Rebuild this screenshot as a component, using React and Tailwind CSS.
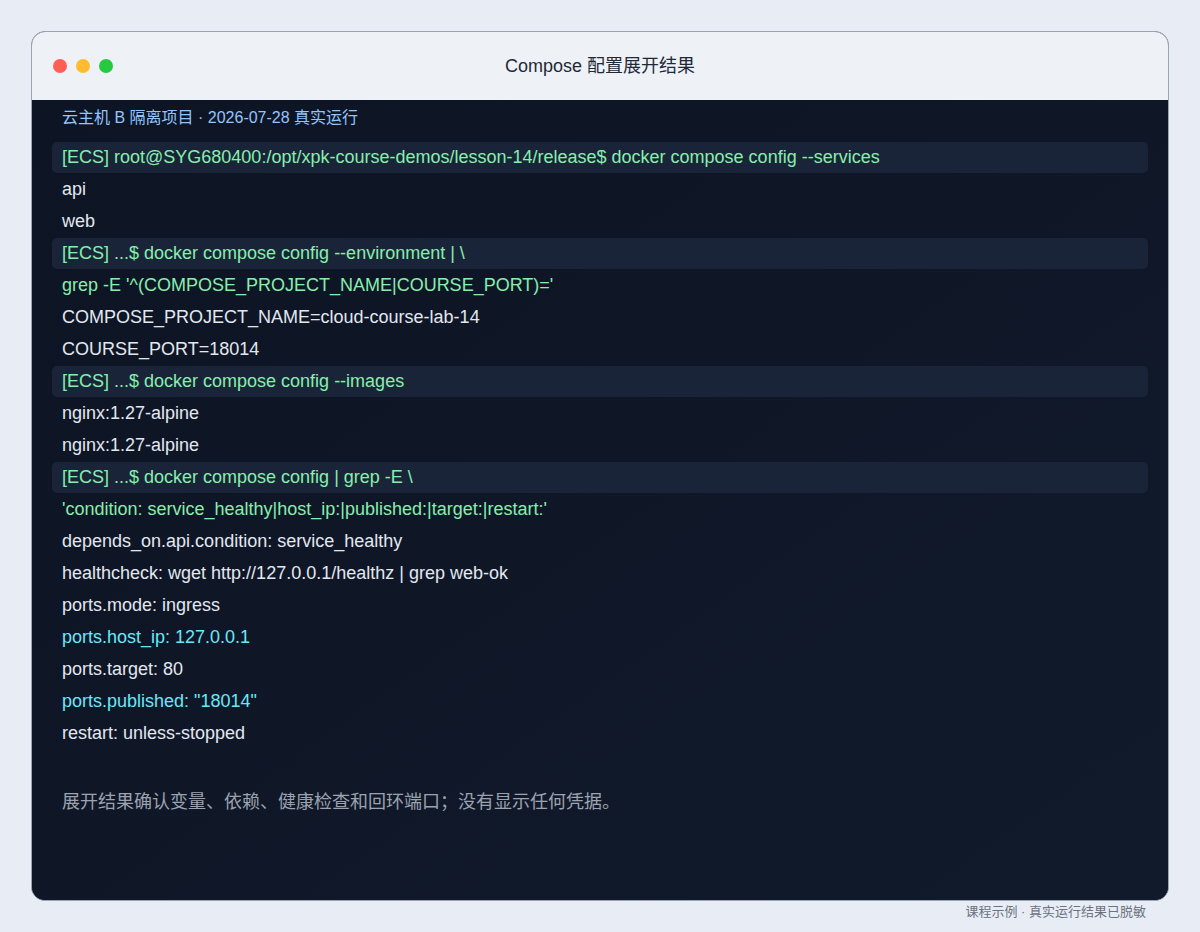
export default function App() {
  const lines = [
    ["c", "[ECS] root@SYG680400:/opt/xpk-course-demos/lesson-14/release$ docker compose config --services"],
    ["o", "api"],
    ["o", "web"],
    ["c", "[ECS] ...$ docker compose config --environment | \\"],
    ["g", "grep -E '^(COMPOSE_PROJECT_NAME|COURSE_PORT)='"],
    ["o", "COMPOSE_PROJECT_NAME=cloud-course-lab-14"],
    ["o", "COURSE_PORT=18014"],
    ["c", "[ECS] ...$ docker compose config --images"],
    ["o", "nginx:1.27-alpine"],
    ["o", "nginx:1.27-alpine"],
    ["c", "[ECS] ...$ docker compose config | grep -E \\"],
    ["g", "'condition: service_healthy|host_ip:|published:|target:|restart:'"],
    ["o", "depends_on.api.condition: service_healthy"],
    ["o", "healthcheck: wget http://127.0.0.1/healthz | grep web-ok"],
    ["o", "ports.mode: ingress"],
    ["h", "ports.host_ip: 127.0.0.1"],
    ["o", "ports.target: 80"],
    ["h", "ports.published: \"18014\""],
    ["o", "restart: unless-stopped"],
  ];
  const font = { fontFamily: "'Helvetica Neue', 'Liberation Sans', Arial, 'Noto Sans CJK SC', sans-serif" };
  return (
    <div className="w-[1200px] h-[932px] bg-[#e8edf5] pt-[31px] px-[31px]" style={font}>
      <div className="w-[1138px] h-[870px] rounded-[14px] overflow-hidden border border-[#9aa3b0] flex flex-col bg-[#0f1626]">
        <div className="h-[68px] bg-[#eef2f7] flex items-center relative shrink-0">
          <div className="flex gap-[9px] pl-[21px]">
            <span className="w-[14px] h-[14px] rounded-full bg-[#ff5f57]" />
            <span className="w-[14px] h-[14px] rounded-full bg-[#febc2e]" />
            <span className="w-[14px] h-[14px] rounded-full bg-[#28c840]" />
          </div>
          <div className="absolute inset-0 flex items-center justify-center text-[18px] text-[#1f2937]">Compose 配置展开结果</div>
        </div>
        <div className="flex-1 px-[20px] pt-[6px] bg-gradient-to-br from-[#0d1424] to-[#111a2b]">
          <div className="h-[24px] pl-[10px] text-[16px] text-[#93c5fd] flex items-center">云主机 B 隔离项目 · 2026-07-28 真实运行</div>
          <div className="mt-[12px] flex flex-col gap-[1px]">
            {lines.map(([t, s], i) => (
              <div key={i} className={"h-[31px] flex items-center pl-[10px] text-[18px] whitespace-pre rounded-[5px] " + (t === "c" ? "bg-[#1a2438] text-[#86efac]" : t === "g" ? "text-[#86efac]" : t === "h" ? "text-[#67e8f9]" : "text-[#e2e8f0]")}>{s}</div>
            ))}
          </div>
          <div className="mt-[40px] pl-[10px] text-[18px] text-[#9ca3af]">展开结果确认变量、依赖、健康检查和回环端口；没有显示任何凭据。</div>
        </div>
      </div>
      <div className="w-[1115px] text-right text-[13px] text-[#6b7280] mt-[1px]">课程示例 · 真实运行结果已脱敏</div>
    </div>
  );
}
